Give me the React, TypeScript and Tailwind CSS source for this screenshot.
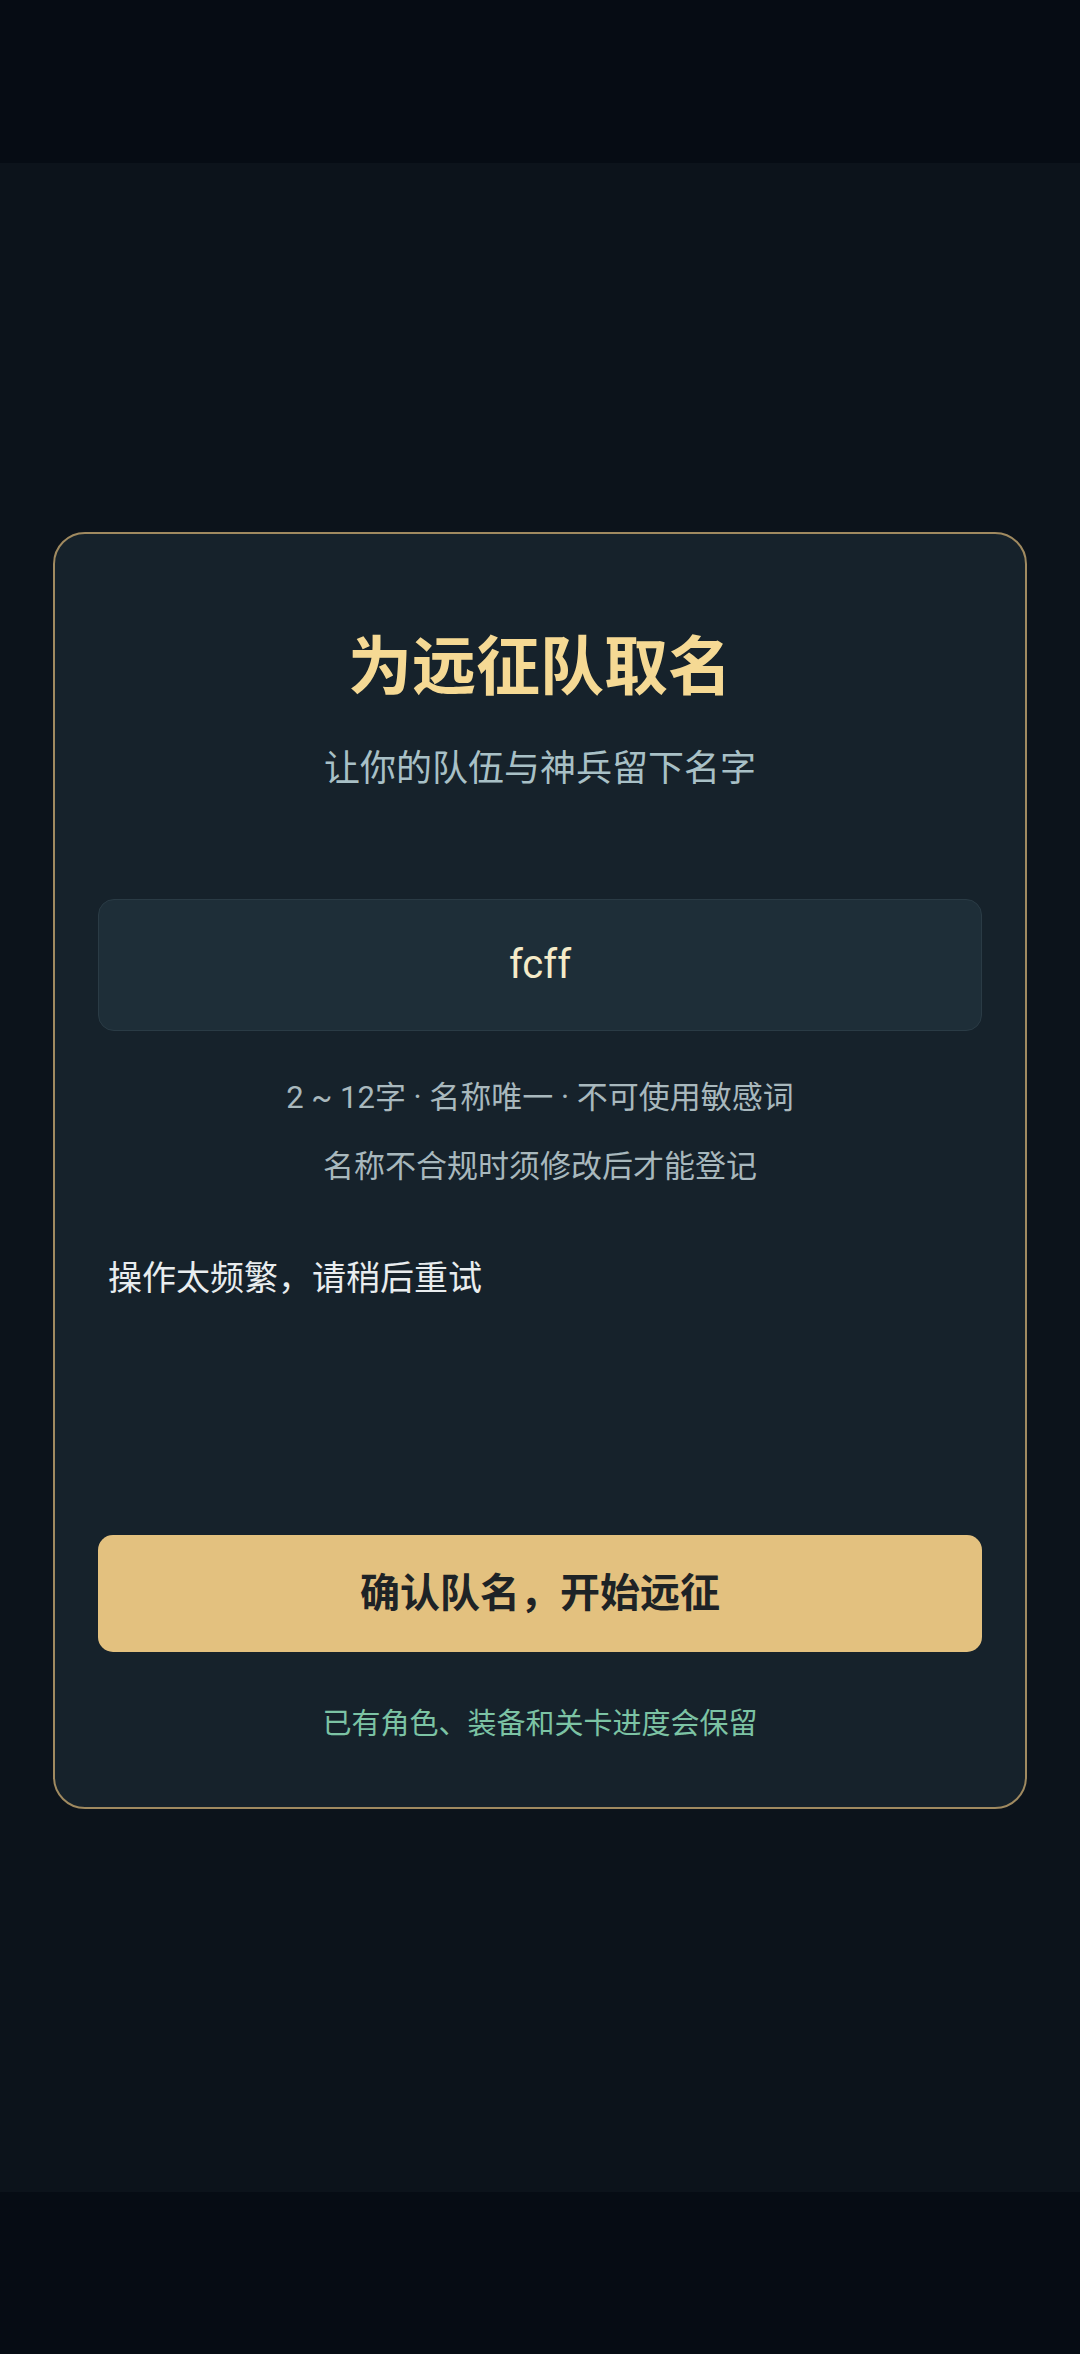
const font = "font-['Roboto','Noto_Sans_CJK_SC',sans-serif]";

export default function App() {
  return (
    <div className={`flex min-h-[2354px] w-full flex-col bg-[#060c14] ${font}`}>
      {/* status bar area */}
      <div className="h-[163px] shrink-0 bg-[#060c14]" />

      {/* page */}
      <main className="h-[2029px] shrink-0 bg-[#0c131b] px-[53px] pt-[369px]">
        <section className="flex flex-col rounded-[32px] border-2 border-[#a08a60] bg-[#16222b] px-[43px] pb-[60px] pt-[96px]">
          <h1 className="text-center text-[64px] font-bold leading-[76px] text-[#f5d994]">
            为远征队取名
          </h1>
          <p className="mt-[39px] text-center text-[36px] leading-[48px] text-[#a8c0c6]">
            让你的队伍与神兵留下名字
          </p>

          <div className="mt-[106px] flex h-[132px] items-center justify-center rounded-[16px] border-[1.5px] border-[#2a3b45] bg-[#1e2e38]">
            <span className="text-[40px] leading-none text-[#f5ebc8]">fcff</span>
          </div>

          <p className="mt-[44px] text-center text-[31px] leading-[46px] text-[#a8b8bd]">
            2 ~ 12字 · 名称唯一 · 不可使用敏感词
          </p>
          <p className="mt-[23px] text-center text-[31px] leading-[46px] text-[#a8b8bd]">
            名称不合规时须修改后才能登记
          </p>

          <p className="mt-[64px] pl-[10px] text-[34px] leading-[48px] text-[#e9edef]">
            操作太频繁，请稍后重试
          </p>

          <button className="mt-[233px] flex h-[117px] items-center justify-center rounded-[15px] bg-[#e3c17f]">
            <span className="text-[40px] font-bold leading-none text-[#1e2326]">确认队名，开始远征</span>
          </button>

          <p className="mt-[49px] text-center text-[29px] leading-[46px] text-[#7cc3a4]">
            已有角色、装备和关卡进度会保留
          </p>
        </section>
      </main>

      {/* nav bar area */}
      <div className="h-[162px] shrink-0 bg-[#060c14]" />
    </div>
  );
}
